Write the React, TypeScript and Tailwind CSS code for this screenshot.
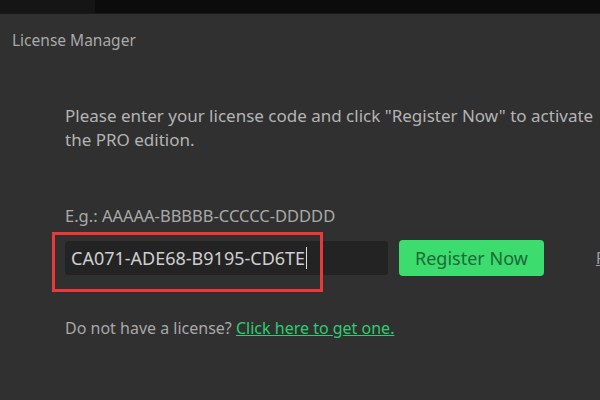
import React from "react";

export default function App() {
  const font = { fontFamily: '"Noto Sans", "Open Sans", sans-serif' };
  return (
    <div className="w-[600px] h-[400px] overflow-hidden bg-[#303030] flex flex-col" style={font}>
      <div className="h-[14px] shrink-0 flex border-b border-[#1a1a1a]">
        <div className="w-[95px] bg-[#151515]" />
        <div className="flex-1 bg-[#0c0c0c]" />
      </div>
      <div className="px-3 pt-[17px] text-[15.5px] leading-[18px] text-[#a8a8a8]">License Manager</div>
      <div className="pl-[65px] pt-[55px] flex flex-col">
        <p className="text-[17px] leading-[24px] text-[#b4b4b4] whitespace-nowrap">
          Please enter your license code and click "Register Now" to activate
          <br />
          the PRO edition.
        </p>
        <div className="mt-[54px] text-[16.5px] leading-[20px] text-[#aaaaaa]">E.g.: AAAAA-BBBBB-CCCCC-DDDDD</div>
        <div className="mt-[14px] flex items-center gap-[11px] whitespace-nowrap">
          <div className="relative shrink-0">
            <div className="w-[323px] h-[34px] bg-[#232323] rounded-[3px] flex items-center pl-[6px] text-[18px] text-[#cfcfcf]">
              CA071-ADE68-B9195-CD6TE
              <span className="inline-block w-[1px] h-[22px] bg-[#dddddd] ml-[1px]" />
            </div>
            <div className="absolute left-[-13px] top-[-9px] w-[271px] h-[60px] border-[3px] border-[#e83a3a]" />
          </div>
          <button className="shrink-0 h-[36px] px-[16px] bg-[#3ddc6e] rounded-[4px] text-[18px] text-[#1a6b38]">Register Now</button>
          <span className="shrink-0 ml-[41px] text-[17px] text-[#999999] underline">Recover</span>
        </div>
        <div className="mt-[42px] text-[16px] leading-[20px] text-[#a8a8a8] whitespace-nowrap">
          Do not have a license?{" "}
          <span className="text-[#2ecc71] underline">Click here to get one.</span>
        </div>
      </div>
    </div>
  );
}
